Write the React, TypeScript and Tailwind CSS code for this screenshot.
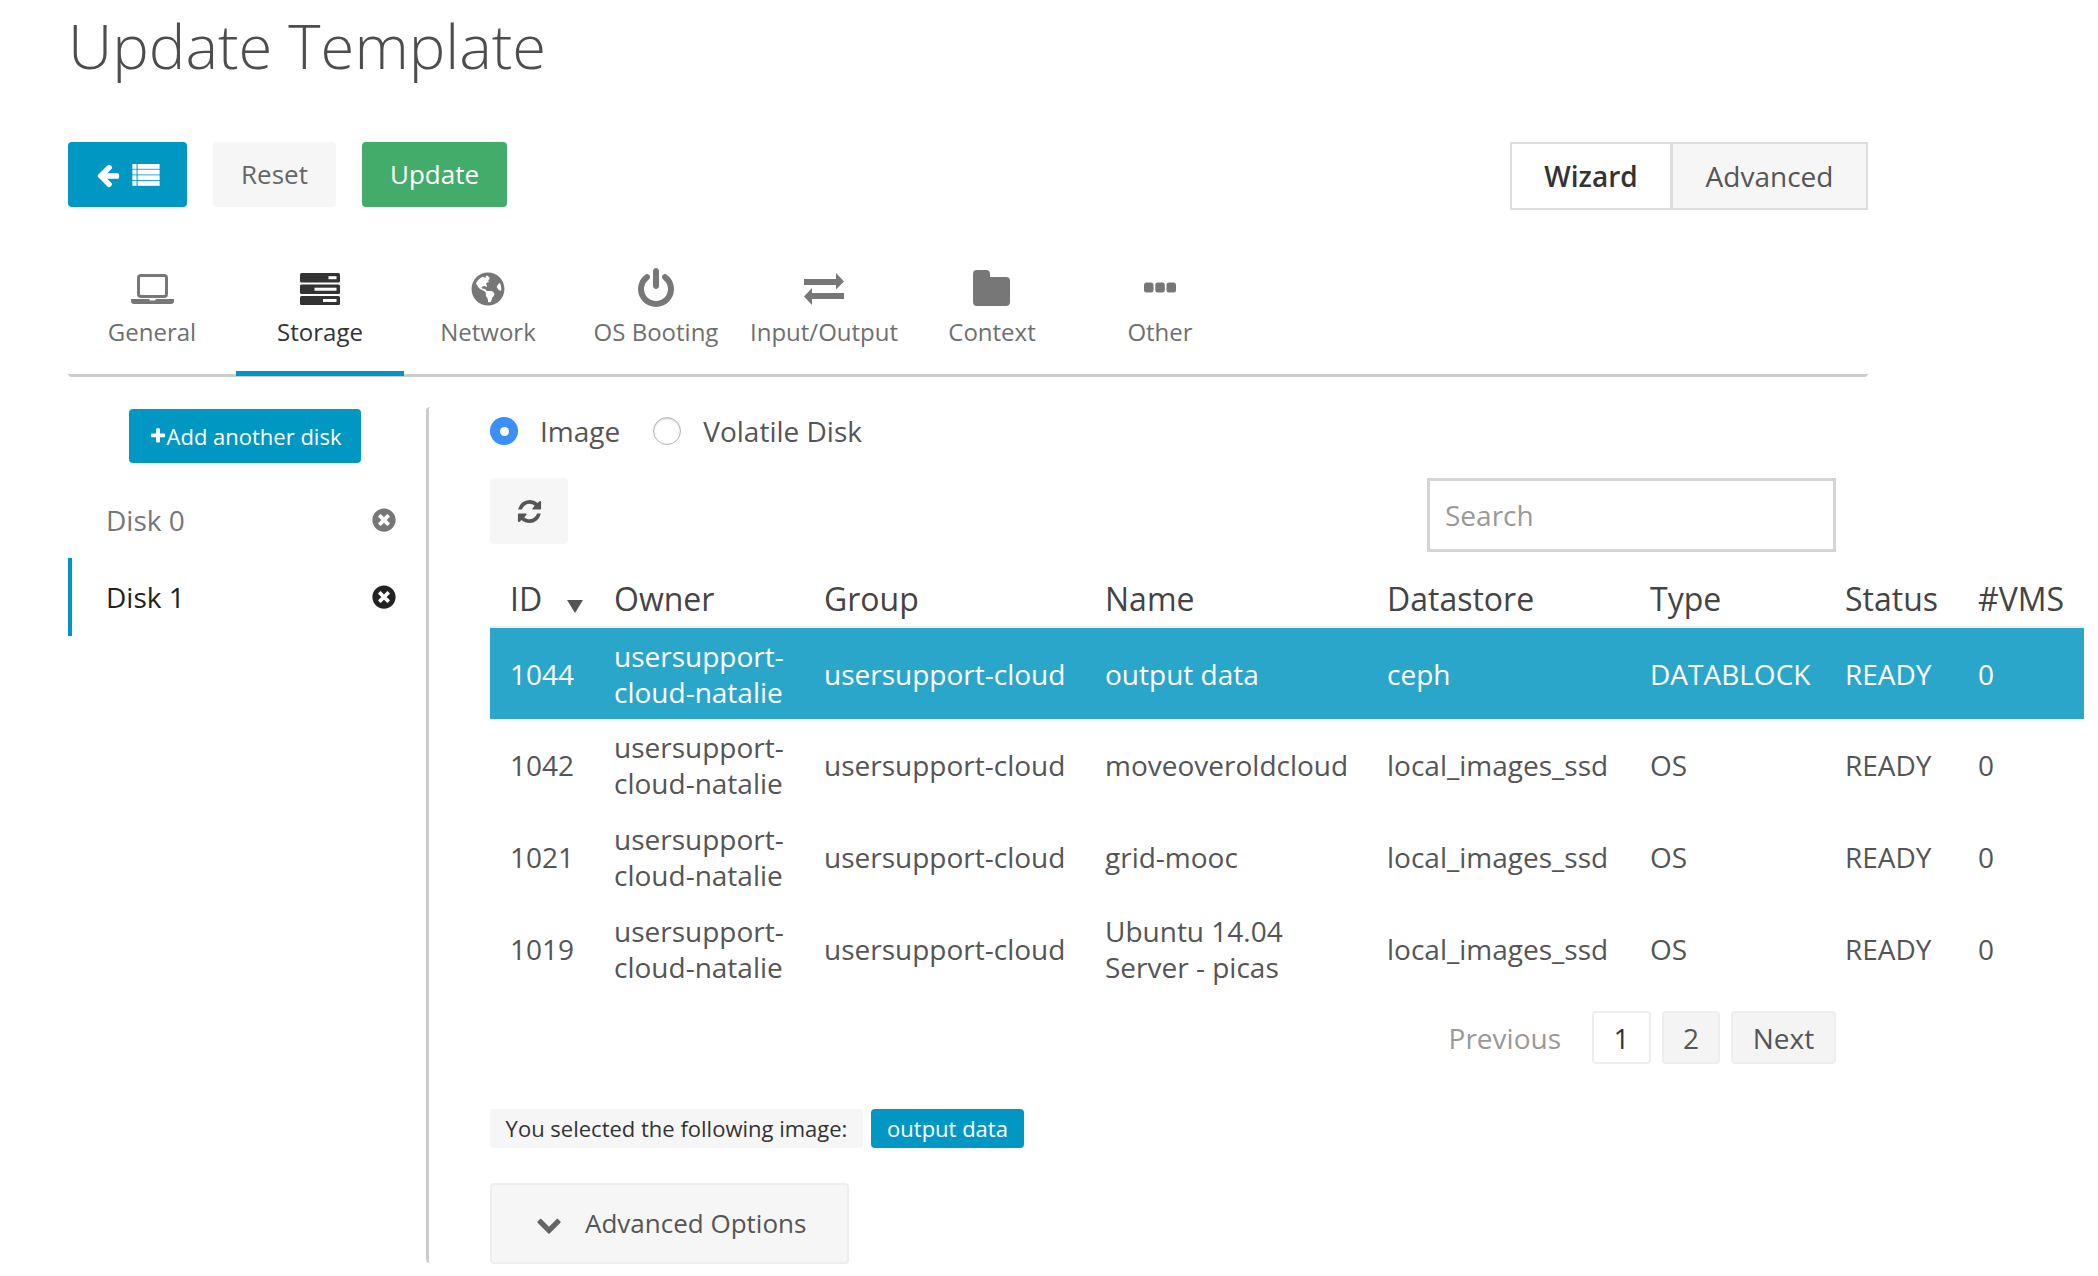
import React from 'react';
import { FaGlobeAmericas, FaTimesCircle } from 'react-icons/fa';

// font awesome 4 glyphs, the packaged ones are redrawn and don't match
function Fa4({ d, size, className }: { d: string; size: number; className?: string }) {
  return (
    <svg width={size} height={size} viewBox="0 0 1792 1792" fill="currentColor" className={className}>
      <path d={d} />
    </svg>
  );
}

const arrowLeft =
  'M1664 896v128q0 53-32.5 90.5t-84.5 37.5h-704l293 294q38 36 38 90t-38 90l-75 76q-37 37-90 37-52 0-91-37l-651-652q-37-37-37-90 0-52 37-91l651-650q38-38 91-38 52 0 90 38l75 74q38 38 38 91t-38 91l-293 293h704q52 0 84.5 37.5t32.5 90.5z';
const refresh =
  'M1639 1056q0 5-1 7-64 268-268 434.5t-478 166.5q-146 0-282.5-55t-243.5-157l-129 129q-19 19-45 19t-45-19-19-45v-448q0-26 19-45t45-19h448q26 0 45 19t19 45-19 45l-137 137q71 66 161 102t187 36q134 0 250-65t186-179q11-17 53-117 8-23 30-23h192q13 0 22.5 9.5t9.5 22.5zm25-800v448q0 26-19 45t-45 19h-448q-26 0-45-19t-19-45 19-45l138-138q-148-137-349-137-134 0-250 65t-186 179q-11 17-53 117-8 23-30 23h-199q-13 0-22.5-9.5t-9.5-22.5v-7q65-268 270-434.5t480-166.5q146 0 284 55.5t245 156.5l130-129q19-19 45-19t45 19 19 45z';
const chevronDown =
  'M1683 808l-742 741q-19 19-45 19t-45-19l-742-741q-19-19-19-45.5t19-45.5l166-165q19-19 45-19t45 19l531 531 531-531q19-19 45-19t45 19l166 165q19 19 19 45.5t-19 45.5z';
const plus =
  'M1600 736v192q0 40-28 68t-68 28h-416v416q0 40-28 68t-68 28h-192q-40 0-68-28t-28-68v-416h-416q-40 0-68-28t-28-68v-192q0-40 28-68t68-28h416v-416q0-40 28-68t68-28h192q40 0 68 28t28 68v416h416q40 0 68 28t28 68z';
const powerOff =
  'M1664 896q0 156-61 298t-164 245-245 164-298 61-298-61-245-164-164-245-61-298q0-182 80.5-343t226.5-270q43-32 95.5-25t83.5 50q32 42 24.5 94.5t-49.5 84.5q-98 74-151.5 181t-53.5 228q0 104 40.5 198.5t109.5 163.5 163.5 109.5 198.5 40.5 198.5-40.5 163.5-109.5 109.5-163.5 40.5-198.5q0-121-53.5-228t-151.5-181q-42-32-49.5-84.5t24.5-94.5q31-43 84-50t95 25q146 109 226.5 270t80.5 343zm-640-768v640q0 52-38 90t-90 38-90-38-38-90v-640q0-52 38-90t90-38 90 38 38 90z';

function ListIcon() {
  return (
    <svg width="28" height="22" viewBox="0 0 26 21" fill="currentColor">
      {[0, 5.4, 10.8, 16.2].map((y) => (
        <g key={y}>
          <rect x="0" y={y} width="4" height="4.6" />
          <rect x="5" y={y} width="21" height="4.6" />
        </g>
      ))}
    </svg>
  );
}

function LaptopIcon() {
  return (
    <svg width="43" height="30" viewBox="0 0 43 30" fill="currentColor">
      <rect x="7.5" y="1.5" width="28" height="21" rx="2.5" fill="none" stroke="currentColor" strokeWidth="3" />
      <path d="M0 25h18l1 1.5h5l1-1.5h18v2q0 3-3 3H3q-3 0-3-3z" />
    </svg>
  );
}

function ServerIcon() {
  return (
    <svg width="40" height="32" viewBox="0 0 40 32">
      <rect x="0" y="0" width="40" height="9.5" rx="1.5" fill="currentColor" />
      <rect x="0" y="11.5" width="40" height="9.5" rx="1.5" fill="currentColor" />
      <rect x="0" y="23" width="40" height="9" rx="1.5" fill="currentColor" />
      <rect x="28.5" y="3.2" width="8" height="3" fill="#ffffff" />
      <rect x="14.5" y="14.7" width="22" height="3" fill="#ffffff" />
      <rect x="23" y="26" width="13.5" height="3" fill="#ffffff" />
    </svg>
  );
}

function GlobeIcon() {
  return <FaGlobeAmericas size={34} />;
}

function PowerIcon() {
  return <Fa4 d={powerOff} size={42} />;
}

function ExchangeIcon() {
  return (
    <svg width="40" height="34" viewBox="0 0 40 34" fill="currentColor">
      <path d="M0 7h32V1l8 8.5-8 8V13H0z" />
      <path d="M40 21H8v-5L0 24.5 8 33v-6h32z" />
    </svg>
  );
}

function FolderIcon() {
  return (
    <svg width="37" height="36" viewBox="0 0 37 36" fill="currentColor" className="-mt-[2px] -ml-[1px]">
      <path d="M4 0h9q4 0 4 4v3h16q4 0 4 4v21q0 4-4 4H4q-4 0-4-4V4q0-4 4-4z" />
    </svg>
  );
}

function DotsIcon() {
  return (
    <svg width="32" height="11" viewBox="0 0 32 11" fill="currentColor" className="-mt-[4px]">
      <rect x="0" y="0.5" width="9.5" height="10" rx="2.5" />
      <rect x="11.3" y="0.5" width="9.5" height="10" rx="2.5" />
      <rect x="22.5" y="0.5" width="9.5" height="10" rx="2.5" />
    </svg>
  );
}

const tabs = [
  { label: 'General', icon: LaptopIcon },
  { label: 'Storage', icon: ServerIcon, active: true },
  { label: 'Network', icon: GlobeIcon },
  { label: 'OS Booting', icon: PowerIcon },
  { label: 'Input/Output', icon: ExchangeIcon },
  { label: 'Context', icon: FolderIcon },
  { label: 'Other', icon: DotsIcon },
];

const rows = [
  { id: '1044', name: 'output data', datastore: 'ceph', type: 'DATABLOCK', selected: true },
  { id: '1042', name: 'moveoveroldcloud', datastore: 'local_images_ssd', type: 'OS' },
  { id: '1021', name: 'grid-mooc', datastore: 'local_images_ssd', type: 'OS' },
  { id: '1019', name: 'Ubuntu 14.04 Server - picas', datastore: 'local_images_ssd', type: 'OS' },
];

const headers = ['Owner', 'Group', 'Name', 'Datastore', 'Type', 'Status', '#VMS'];

function Tab({ label, icon: Icon, active }: { label: string; icon: React.ComponentType; active?: boolean }) {
  return (
    <div
      className={`w-[168px] h-[107px] -mb-[2px] flex flex-col items-center pt-[2px] border-b-[5px] ${
        active ? 'border-[#0095c4] text-[#333333]' : 'border-transparent text-[#777777]'
      }`}
    >
      <span className="h-[36px] flex items-center">
        <Icon />
      </span>
      <span className={`mt-[8px] text-[24px] leading-[34px] ${active ? 'text-[#333333]' : 'text-[#6f6f6f]'}`}>{label}</span>
    </div>
  );
}

function Radio({ checked, label }: { checked?: boolean; label: string }) {
  return (
    <label className="flex items-center">
      {checked ? (
        <span className="w-[28px] h-[28px] rounded-full bg-[#3b8ff6] flex items-center justify-center">
          <span className="w-[9px] h-[9px] rounded-full bg-white" />
        </span>
      ) : (
        <span className="w-[28px] h-[28px] rounded-full border border-[#b5b5b5] bg-white shadow-[inset_0_1px_2px_rgba(0,0,0,0.2)]" />
      )}
      <span className="ml-[22px] text-[28px] text-[#555555]">{label}</span>
    </label>
  );
}

export default function App() {
  return (
    <div className="w-[2098px] h-[1276px] overflow-hidden bg-white text-[#555555] font-['Open_Sans',sans-serif]">
      <div className="pl-[68px]">
        <h1 className="text-[61.5px] leading-[90px] font-light text-[#4d4d4d]">Update Template</h1>

        <div className="w-[1800px] mt-[52px] flex justify-between items-start">
          <div className="flex">
            <button className="w-[119px] h-[65px] rounded-[4px] bg-[#0098c3] text-white flex items-center justify-center gap-[11px]">
              <Fa4 d={arrowLeft} size={26} />
              <ListIcon />
            </button>
            <button className="ml-[26px] w-[123px] h-[65px] rounded-[4px] bg-[#f6f6f6] text-[26px] text-[#666666]">Reset</button>
            <button className="ml-[26px] w-[145px] h-[65px] rounded-[4px] bg-[#43ac6a] text-[26px] text-white">Update</button>
          </div>
          <div className="flex border-2 border-[#dddddd] h-[68px] text-[28px]">
            <div className="w-[161px] flex items-center justify-center font-semibold text-[#333333] bg-white border-r-[3px] border-[#dddddd]">Wizard</div>
            <div className="w-[193px] flex items-center justify-center bg-[#f6f6f6] text-[#555555]">Advanced</div>
          </div>
        </div>

        <div className="w-[1800px] mt-[59px] flex border-b-[3px] border-[#cccccc] rounded-b-[4px]">
          {tabs.map((t) => (
            <Tab key={t.label} {...t} />
          ))}
        </div>

        <div className="flex mt-[32px]">
          <div className="w-[358px] shrink-0">
            <div className="flex justify-center pr-[4px]">
              <button className="w-[232px] h-[54px] rounded-[4px] bg-[#0098c3] text-white text-[22px] flex items-center justify-center">
                <Fa4 d={plus} size={18} />
                Add another disk
              </button>
            </div>
            <div className="mt-[18px] h-[77px] flex items-center justify-between pl-[38px] pr-[30px] text-[28px] text-[#777777]">
              Disk 0
              <FaTimesCircle size={24} />
            </div>
            <div className="h-[78px] flex items-center justify-between pl-[34px] pr-[30px] text-[28px] text-[#222222] border-l-[4px] border-[#0095c4]">
              Disk 1
              <FaTimesCircle size={24} />
            </div>
          </div>

          <div className="w-[1655px] h-[856px] border-l-[3px] border-[#cccccc] rounded-l-[4px] pl-[61px] -mt-[2px]">
            <div className="flex gap-[33px] h-[48px] items-center mt-0">
              <Radio checked label="Image" />
              <Radio label="Volatile Disk" />
            </div>
            <div className="w-[1346px] mt-[23px] flex justify-between items-start">
              <button className="w-[78px] h-[66px] rounded-[4px] bg-[#f6f6f6] text-[#555555] flex items-center justify-center">
                <Fa4 d={refresh} size={27} />
              </button>
              <input
                placeholder="Search"
                className="w-[409px] h-[74px] border-[3px] border-[#d4d4d4] px-[15px] text-[28px] placeholder:text-[#999999] outline-none"
              />
            </div>

            <table className="w-[1594px] table-fixed mt-[3px] text-[28px] leading-[36px]">
              <colgroup>
                <col className="w-[104px]" />
                <col className="w-[210px]" />
                <col className="w-[281px]" />
                <col className="w-[282px]" />
                <col className="w-[263px]" />
                <col className="w-[195px]" />
                <col className="w-[133px]" />
                <col />
              </colgroup>
              <thead>
                <tr className="h-[72px] border-b-[2px] border-[#eeeeee] text-[32px] text-[#444444]">
                  <th className="pl-[20px] pt-[16px] font-normal text-left">
                    ID
                    <span className="inline-block ml-[25px] w-0 h-0 border-x-[8px] border-x-transparent border-t-[13px] border-t-[#555555] align-[-2px]" />
                  </th>
                  {headers.map((h) => (
                    <th key={h} className="pl-[20px] pt-[16px] font-normal text-left">{h}</th>
                  ))}
                </tr>
              </thead>
              <tbody>
                {rows.map((r) => (
                  <tr key={r.id} className={`h-[92px] ${r.selected ? 'bg-[#2ba6cb] text-white' : ''}`}>
                    <td className="pl-[20px]">{r.id}</td>
                    <td className="pl-[20px]">usersupport-<br />cloud-natalie</td>
                    <td className="pl-[20px]">usersupport-cloud</td>
                    <td className="pl-[20px]">{r.name}</td>
                    <td className="pl-[20px]">{r.datastore}</td>
                    <td className="pl-[20px]">{r.type}</td>
                    <td className="pl-[20px]">READY</td>
                    <td className="pl-[20px]">0</td>
                  </tr>
                ))}
              </tbody>
            </table>

            <div className="w-[1346px] mt-[16px] flex justify-end items-center text-[28px]">
              <span className="text-[#999999] mr-[31px]">Previous</span>
              <span className="w-[59px] h-[53px] flex items-center justify-center border-2 border-[#eeeeee] rounded-[4px] text-[#333333]">1</span>
              <span className="ml-[11px] w-[58px] h-[53px] flex items-center justify-center rounded-[4px] bg-[#f4f4f4] border-2 border-[#eeeeee]">2</span>
              <span className="ml-[11px] w-[105px] h-[53px] flex items-center justify-center rounded-[4px] bg-[#f4f4f4] border-2 border-[#eeeeee]">Next</span>
            </div>

            <div className="mt-[45px] flex text-[22px]">
              <span className="w-[373px] h-[39px] flex items-center justify-center rounded-[4px] bg-[#f6f6f6] text-[#333333]">You selected the following image:</span>
              <span className="ml-[8px] w-[153px] h-[39px] flex items-center justify-center rounded-[4px] bg-[#0098c3] text-white">output data</span>
            </div>

            <div className="mt-[35px] w-[359px] h-[81px] flex items-center rounded-[4px] bg-[#f6f6f6] border-2 border-[#eeeeee] text-[26px]">
              <span className="ml-[44px] text-[#666666]"><Fa4 d={chevronDown} size={26} /></span>
              <span className="ml-[23px]">Advanced Options</span>
            </div>
          </div>
        </div>
      </div>
    </div>
  );
}
